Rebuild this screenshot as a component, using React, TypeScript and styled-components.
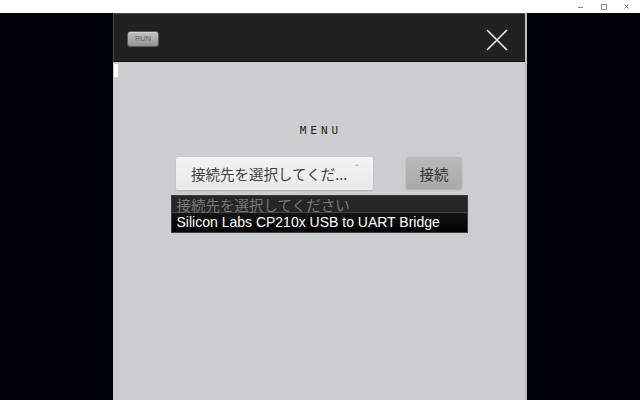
import React from "react";
import styled, { createGlobalStyle } from "styled-components";

const GlobalStyle = createGlobalStyle`
  html, body { margin: 0; padding: 0; background: #ffffff; }
  body { font-family: "Liberation Sans", "Noto Sans CJK JP", sans-serif; overflow: hidden; }
  * { box-sizing: border-box; }
`;

const Screen = styled.div`
  width: 640px;
  height: 400px;
  display: flex;
  flex-direction: column;
`;

const TitleBar = styled.div`
  height: 13px;
  background: #ffffff;
  display: flex;
  justify-content: flex-end;
  align-items: center;
  gap: 12px;
  padding-right: 8px;
`;

const WinCtrl = styled.svg`
  display: block;
  width: 11px;
  height: 11px;
`;

const Stage = styled.div`
  flex: 1;
  background: #01020b;
  display: flex;
  justify-content: center;
`;

const Panel = styled.div`
  width: 414px;
  display: flex;
  flex-direction: column;
  background: #cdcdcf;
  border-right: 2px solid #bdbdbf;
`;

const Header = styled.div`
  height: 49px;
  background: #212122;
  border-top: 1px solid #4a4a4a;
  border-left: 1px solid #4a4a4a;
  border-bottom: 1px solid #0d0d0d;
  display: flex;
  align-items: center;
  justify-content: space-between;
  padding: 0 17px 0 13px;
`;

const RunButton = styled.button`
  width: 32px;
  height: 16px;
  margin-top: 3px;
  padding: 0;
  border: 1px solid #5a5a5a;
  border-radius: 3px;
  background: linear-gradient(#c2c2c2, #939393);
  color: #666666;
  font-family: "Liberation Sans", sans-serif;
  font-size: 7.5px;
  line-height: 14px;
  text-align: center;
  box-shadow: inset 0 1px 0 rgba(255,255,255,0.3);
`;

const CloseIcon = styled.svg`
  display: block;
  width: 22px;
  height: 22px;
  margin-top: 4px;
`;

const Body = styled.div`
  flex: 1;
  display: flex;
  flex-direction: column;
  align-items: center;
`;

const Mark = styled.div`
  align-self: flex-start;
  width: 4px;
  height: 13px;
  margin: 2px 0 0 1px;
  background: #ffffff;
`;

const Title = styled.div`
  margin-top: 47px;
  font-family: "DejaVu Sans Mono", monospace;
  font-size: 11px;
  line-height: 13px;
  letter-spacing: 4px;
  padding-left: 4px;
  color: #1e1e1e;
`;

const Controls = styled.div`
  margin-top: 20px;
  display: flex;
  gap: 33px;
  align-items: flex-start;
`;

const Select = styled.div`
  width: 197px;
  height: 33px;
  border-radius: 2px;
  background: linear-gradient(#f3f3f3, #e9e9e9);
  box-shadow: 0 1px 2px rgba(0,0,0,0.12);
  display: flex;
  align-items: center;
  padding-left: 15px;
  font-family: "Noto Sans CJK JP", sans-serif;
  font-size: 14.5px;
  color: #404040;
`;

const Caret = styled.span`
  margin-left: 8px;
  margin-top: -10px;
  font-size: 10px;
  color: #e07a3a;
`;

const ConnectButton = styled.button`
  width: 56px;
  height: 32px;
  padding: 0;
  border: none;
  border-radius: 2px;
  background: linear-gradient(#b9b9b9, #a9a9a9);
  box-shadow: 0 1px 2px rgba(0,0,0,0.15);
  font-family: "Noto Sans CJK JP", sans-serif;
  font-size: 14.5px;
  color: #333333;
`;

const List = styled.div`
  width: 297px;
  margin-top: 5px;
  border: 1px solid #3c3c3c;
  background: #111;
  display: flex;
  flex-direction: column;
`;

const Option = styled.div<{ $placeholder?: boolean }>`
  height: ${(p) => (p.$placeholder ? "17px" : "19px")};
  line-height: ${(p) => (p.$placeholder ? "17px" : "19px")};
  padding-left: 5px;
  font-family: ${(p) =>
    p.$placeholder ? '"Noto Sans CJK JP", sans-serif' : '"Liberation Sans", "Noto Sans CJK JP", sans-serif'};
  font-size: ${(p) => (p.$placeholder ? "14.5px" : "14px")};
  white-space: nowrap;
  color: ${(p) => (p.$placeholder ? "#7a7a7a" : "#ffffff")};
  background: ${(p) =>
    p.$placeholder ? "#262626" : "linear-gradient(#151515, #000000)"};
  border-bottom: ${(p) => (p.$placeholder ? "1px solid #444" : "none")};
`;

export default function App() {
  return (
    <Screen>
      <GlobalStyle />
      <TitleBar>
        <WinCtrl viewBox="0 0 11 11">
          <line x1="3" y1="6.5" x2="8" y2="6.5" stroke="#8a8a8a" strokeWidth="1" />
        </WinCtrl>
        <WinCtrl viewBox="0 0 11 11">
          <rect x="3.5" y="3.5" width="5" height="5" fill="none" stroke="#8a8a8a" strokeWidth="1" />
        </WinCtrl>
        <WinCtrl viewBox="0 0 11 11">
          <path d="M3.5 3.5 L7.5 7.5 M7.5 3.5 L3.5 7.5" stroke="#8a8a8a" strokeWidth="1" />
        </WinCtrl>
      </TitleBar>
      <Stage>
        <Panel>
          <Header>
            <RunButton>RUN</RunButton>
            <CloseIcon viewBox="0 0 22 22">
              <path d="M1 1 L21 21 M21 1 L1 21" stroke="#f2f2f2" strokeWidth="1.6" />
            </CloseIcon>
          </Header>
          <Body>
            <Mark />
            <Title>MENU</Title>
            <Controls>
              <Select>
                接続先を選択してくだ...
                <Caret>ˆ</Caret>
              </Select>
              <ConnectButton>接続</ConnectButton>
            </Controls>
            <List>
              <Option $placeholder>接続先を選択してください</Option>
              <Option>Silicon Labs CP210x USB to UART Bridge</Option>
            </List>
          </Body>
        </Panel>
      </Stage>
    </Screen>
  );
}
